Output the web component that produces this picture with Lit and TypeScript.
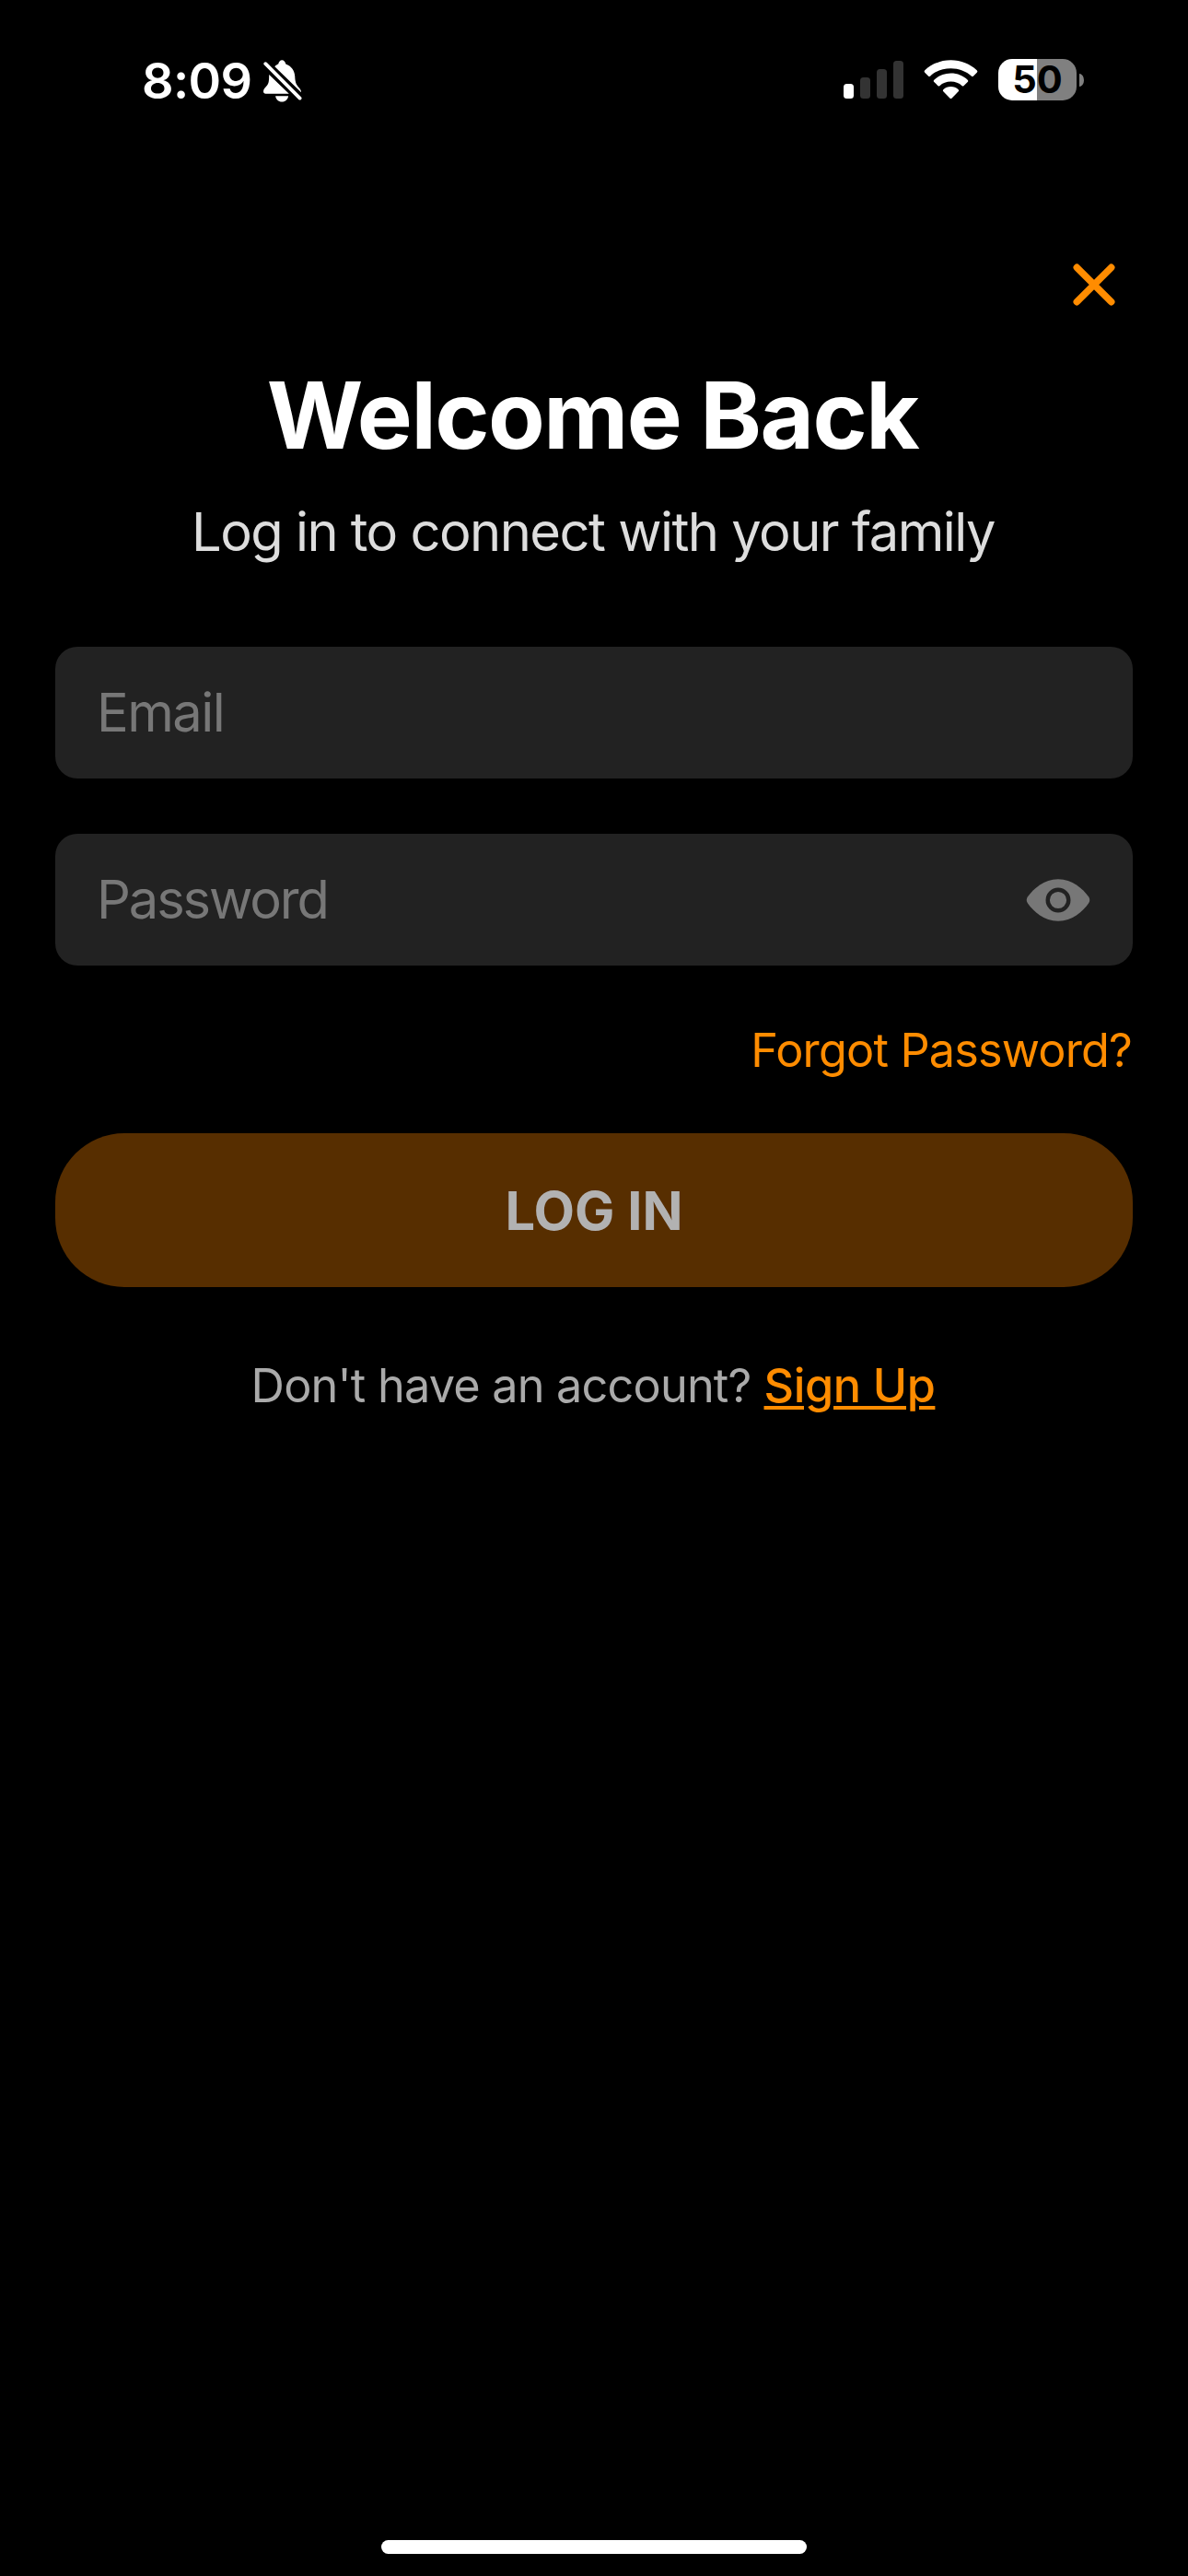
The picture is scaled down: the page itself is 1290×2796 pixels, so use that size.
import { LitElement, html, css } from "lit";
import { customElement, property } from "lit/decorators.js";

@customElement("status-bar")
class StatusBar extends LitElement {
  @property() time = "";
  @property({ type: Number }) battery = 0;

  static styles = css`
    :host {
      display: flex;
      align-items: center;
      justify-content: space-between;
      box-sizing: border-box;
      height: 173px;
      padding: 0 113px 0 154px;
    }
    .left,
    .right {
      display: flex;
      align-items: center;
    }
    .left {
      gap: 12px;
      padding-top: 3px;
    }
    .time {
      font-size: 54px;
      font-weight: 600;
      line-height: 60px;
      letter-spacing: -0.6px;
    }
    svg {
      display: block;
    }
    .wifi {
      margin-left: 22px;
    }
    .battery {
      display: flex;
      align-items: center;
      gap: 3px;
      margin-left: 22px;
    }
    .cell {
      display: flex;
      align-items: center;
      justify-content: center;
      width: 85px;
      height: 45px;
      border-radius: 15px;
      color: #000;
      font-size: 41.5px;
      font-weight: 650;
      line-height: 45px;
    }
    .nub {
      width: 5px;
      height: 14px;
      border-radius: 0 5px 5px 0 / 0 7px 7px 0;
      background: #808080;
    }
  `;

  render() {
    const fill = `background: linear-gradient(90deg, #fff ${this.battery}%, #808080 ${this.battery}%)`;
    return html`
      <div class="left">
        <span class="time">${this.time}</span>
        <svg width="42" height="46" viewBox="0 0 42 46" fill="#fff">
          <path d="M12.3 7.2C14 5.7 15.1 5 16.2 4.6C16.8 1.800 18.2 0.200 20.200 0.200C22.200 0.200 23.700 1.800 24.300 4.600C30.200 6.800 33.800 11.400 34.200 17.600C34.500 24 35.400 26.600 37.800 29.200C39.800 31.200 41.200 33 41 35.200L12.300 7.200Z" />
          <path d="M6.200 16L27.800 36.700H2.600C0.900 36.700 0 35.700 0 34.200C0 31.500 2.300 29.900 4 27.800C5.900 25.400 6.100 22.500 6.200 16Z" />
          <path d="M13.100 39.300H27.100C26.600 43 23.900 45.600 20.100 45.600C16.300 45.600 13.600 43 13.100 39.300Z" />
          <path d="M2.300 4.200L40 42" stroke="#000" stroke-width="8" />
          <path d="M2.300 4.200L39.600 41.600" stroke="#fff" stroke-width="3.800" stroke-linecap="round" />
        </svg>
      </div>
      <div class="right">
        <svg width="65" height="41" viewBox="0 0 65 41" fill="#333">
          <rect x="0" y="25" width="11" height="16" rx="3.500" fill="#fff" />
          <rect x="18" y="18" width="11" height="23" rx="3.500" />
          <rect x="36" y="9" width="11" height="32" rx="3.500" />
          <rect x="54" y="0" width="11" height="41" rx="3.500" />
        </svg>
        <svg class="wifi" width="59" height="43" viewBox="0 0 59 43" fill="#fff">
          <path d="M29.500 0.300C40.500 0.300 50.500 4.500 57.700 11.300Q59 12.500 57.800 13.700L53.800 17.700Q52.900 18.500 52 17.700C46 12.200 38.200 9.200 29.500 9.200C20.800 9.200 13 12.200 7 17.700Q6.100 18.500 5.200 17.700L1.200 13.700Q0 12.500 1.300 11.300C8.500 4.500 18.500 0.300 29.500 0.300Z" />
          <path d="M29.500 14.600C36.700 14.600 43 17.300 47.700 21.800Q48.800 22.900 47.700 24L43.400 28.200Q42.600 29 41.700 28.200C38.400 25.200 34.200 23.600 29.500 23.600C24.800 23.600 20.600 25.200 17.300 28.200Q16.400 29 15.600 28.200L11.300 24Q10.200 22.900 11.300 21.800C16 17.300 22.300 14.600 29.500 14.600Z" />
          <path d="M29.500 29.100C32.700 29.100 35.500 30.200 37.700 32.200Q38.700 33.200 37.700 34.200L30.400 41.700Q29.500 42.500 28.600 41.700L21.300 34.200Q20.300 33.200 21.300 32.200C23.500 30.200 26.300 29.100 29.500 29.100Z" />
        </svg>
        <div class="battery">
          <div class="cell" style=${fill}>${this.battery}</div>
          <div class="nub"></div>
        </div>
      </div>
    `;
  }
}

@customElement("form-field")
class FormField extends LitElement {
  @property() label = "";
  @property({ type: Boolean }) secret = false;

  static styles = css`
    :host {
      display: flex;
      align-items: center;
      justify-content: space-between;
      box-sizing: border-box;
      height: 143px;
      padding: 0 46px 2px 45px;
      border-radius: 24px;
      background: #222;
      color: #777;
      font-size: 57.8px;
      line-height: 70px;
      letter-spacing: -1.5px;
    }
    .secret {
      letter-spacing: -2.1px;
    }
    svg {
      display: block;
      margin-top: 3px;
    }
  `;

  render() {
    return html`
      <span class=${this.secret ? "secret" : "plain"}>${this.label}</span>
      ${this.secret
        ? html`<svg width="70" height="46" viewBox="0 0 70 46">
            <path
              fill="#777"
              d="M35 0.200C50.500 0.200 61.500 10.500 68 19.200C69.700 21.700 69.700 24.100 68 26.600C61.500 35.500 50.500 45.800 35 45.800C19.500 45.800 8.500 35.500 2 26.600C0.300 24.100 0.300 21.700 2 19.200C8.500 10.500 19.500 0.200 35 0.200Z"
            />
            <circle cx="35" cy="23" r="11.300" fill="none" stroke="#222" stroke-width="4.400" />
          </svg>`
        : null}
    `;
  }
}

@customElement("app-root")
class AppRoot extends LitElement {
  static styles = css`
    :host {
      display: flex;
      flex-direction: column;
      box-sizing: border-box;
      height: 2796px;
      background: #000;
      color: #fff;
      font-family: Inter, "Liberation Sans", sans-serif;
      white-space: nowrap;
      overflow: hidden;
    }
    main {
      display: flex;
      flex-direction: column;
      flex: 1;
      padding: 112px 60px 0;
    }
    .close {
      display: block;
      align-self: flex-end;
      margin-right: 19px;
    }
    h1 {
      margin: 57px 0 0;
      padding-right: 3px;
      text-align: center;
      font-size: 100.8px;
      font-weight: 700;
      line-height: 120px;
      letter-spacing: -1.5px;
      word-spacing: -1.5px;
    }
    .subtitle {
      margin: 32px 0 0;
      padding-right: 2px;
      text-align: center;
      color: #ddd;
      font-size: 57.8px;
      line-height: 70px;
      letter-spacing: -1.52px;
    }
    .fields {
      display: flex;
      flex-direction: column;
      gap: 60px;
      margin-top: 90px;
    }
    .forgot {
      align-self: flex-end;
      margin-top: 62px;
      padding-right: 1px;
      color: #ff8c00;
      font-size: 50.4px;
      line-height: 60px;
      letter-spacing: -0.82px;
    }
    .login {
      display: flex;
      align-items: center;
      justify-content: center;
      height: 167px;
      margin: 60px 0 0;
      padding: 0;
      border: 0;
      border-radius: 75px;
      background: #572e00;
      color: #b2b2b2;
      font-family: inherit;
      font-size: 57.8px;
      font-weight: 700;
      line-height: 70px;
    }
    .signup {
      display: flex;
      justify-content: center;
      gap: 14px;
      margin-top: 77px;
      padding-right: 2px;
      color: #aaa;
      font-size: 50.4px;
      line-height: 60px;
      letter-spacing: -0.8px;
    }
    .link {
      color: #ff8c00;
      font-weight: 500;
      letter-spacing: -0.4px;
      text-decoration: underline;
      text-decoration-thickness: 4px;
      text-underline-offset: 4px;
    }
    .home {
      align-self: center;
      width: 462px;
      height: 15px;
      margin-bottom: 24px;
      border-radius: 8px;
      background: #fff;
    }
  `;

  render() {
    return html`
      <status-bar time="8:09" battery="50"></status-bar>
      <main>
        <svg class="close" width="46" height="48" viewBox="0 0 46 48">
          <path d="M4.300 5.300L41.700 42.700M41.700 5.300L4.300 42.700" stroke="#ff8c00" stroke-width="7.500" stroke-linecap="round" />
        </svg>
        <h1>Welcome Back</h1>
        <p class="subtitle">Log in to connect with your family</p>
        <div class="fields">
          <form-field label="Email"></form-field>
          <form-field label="Password" secret></form-field>
        </div>
        <div class="forgot">Forgot Password?</div>
        <button class="login">LOG IN</button>
        <div class="signup">
          <span>Don't have an account?</span>
          <span class="link">Sign Up</span>
        </div>
      </main>
      <div class="home"></div>
    `;
  }
}
